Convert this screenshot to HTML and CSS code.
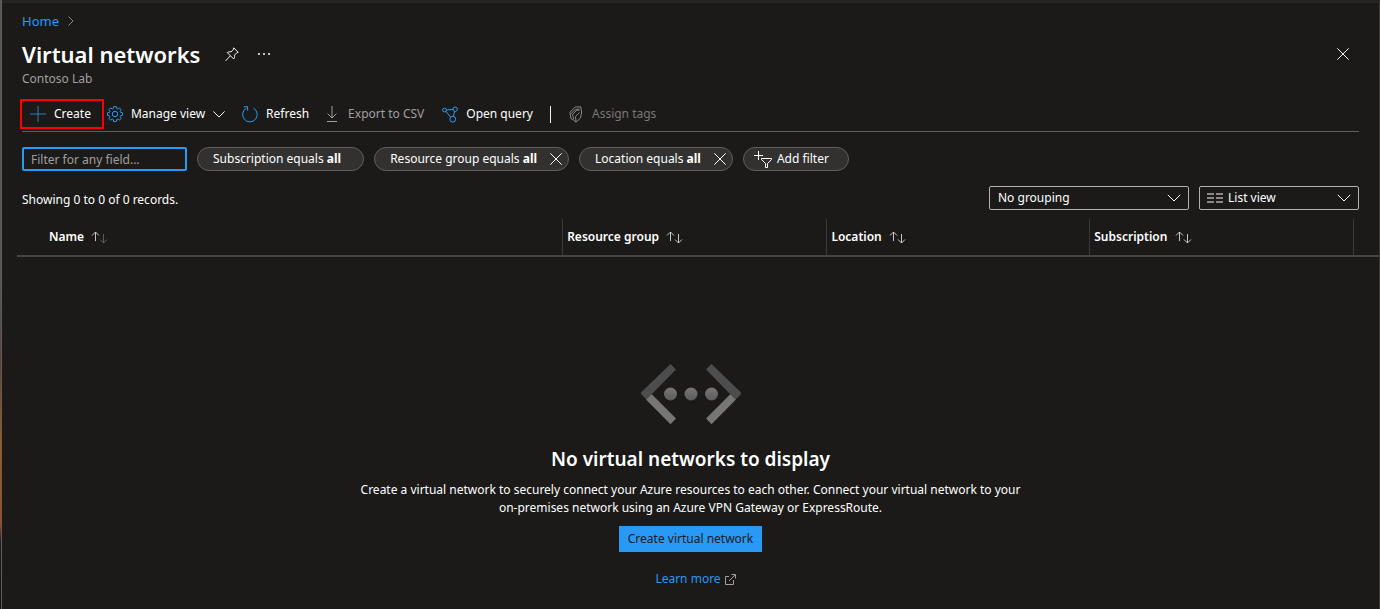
FILE: index.html
```html
<!DOCTYPE html>
<html lang="en">
<head>
<meta charset="utf-8">
<meta name="viewport" content="width=device-width, initial-scale=1">
<title>Virtual networks</title>
<link rel="stylesheet" href="styles.css">
</head>
<body>
<div class="shell">
  <div class="edge"></div>
  <main class="blade">
    <nav class="breadcrumb" aria-label="Breadcrumb">
      <a class="link" href="#">Home</a>
      <svg class="crumb-arrow" width="6" height="10" viewBox="0 0 6 10"><path d="M.5.5 5 5 .5 9.500"/></svg>
    </nav>

    <header class="header">
      <div class="title-row">
        <h1 class="title">Virtual networks</h1>
        <button class="icon-button pin" type="button" aria-label="Pin">
          <svg width="14" height="15" viewBox="0 0 14 15"><path d="M8.700.8 13.200 5.300 11.700 5.800 9.500 8.200C9.800 9.900 9.500 10.900 8.700 12L2.300 5.600C3.500 4.800 4.500 4.600 6.100 4.900L8.300 2.500ZM5.300 8.900.5 13.900"/></svg>
        </button>
        <button class="icon-button more" type="button" aria-label="More">
          <svg width="12" height="2" viewBox="0 0 12 2"><path class="dots" d="M0 0h2v2H0zM5 0h2v2H5zM10 0h2v2h-2z"/></svg>
        </button>
        <button class="icon-button close" type="button" aria-label="Close">
          <svg width="12" height="12" viewBox="0 0 12 12"><path d="M.3.3 11.700 11.700M11.700.3.3 11.700"/></svg>
        </button>
      </div>
      <p class="subtitle">Contoso Lab</p>
    </header>

    <div class="toolbar" role="toolbar" aria-label="Commands">
      <button class="command create" type="button">
        <svg width="16" height="16" viewBox="0 0 16 16"><path class="plus" d="M8 0v16M0 8h16"/></svg>
        Create
      </button>
      <button class="command manage" type="button">
        <svg width="16" height="16" viewBox="0 0 16 16"><path class="blue" d="M6.700.6h2.600l.4 2 1 .4 1.700-1.100 1.800 1.800-1.100 1.700.4 1 2 .4v2.500l-2 .4-.4 1 1.100 1.700-1.800 1.800-1.700-1.100-1 .4-.4 2H6.700l-.4-2-1-.4-1.700 1.100-1.800-1.800 1.100-1.700-.4-1-2-.4V6.800l2-.4.4-1-1.100-1.700 1.800-1.800L5.300 3l1-.4Z"/><circle class="blue" cx="8" cy="8" r="2.700"/></svg>
        Manage view
        <svg class="caret" width="12" height="7" viewBox="0 0 12 7"><path d="M.4.5 6 6 11.600.5"/></svg>
      </button>
      <button class="command refresh" type="button">
        <svg width="16" height="17" viewBox="0 0 16 17"><path class="blue" d="M11.500 2.200A7.300 7.300 0 1 1 4.500 2.100M1.800.7h3.800v3.900"/></svg>
        Refresh
      </button>
      <button class="command muted export" type="button" disabled>
        <svg width="12" height="16" viewBox="0 0 12 16"><path d="M6 0v12M1.500 7.500 6 12l4.500-4.500M1 15.500h10"/></svg>
        Export to CSV
      </button>
      <button class="command query" type="button">
        <svg width="16" height="17" viewBox="0 0 16 17"><g class="blue"><circle cx="2.500" cy="4" r="1.900"/><circle cx="13.200" cy="3.200" r="2.200"/><circle cx="10.800" cy="13.200" r="2.900"/><path d="M4.400 3.900 11 3.400M3.900 5.400l4.700 5.700M12.600 5.300l-1.200 5"/></g></svg>
        Open query
      </button>
      <span class="separator"></span>
      <button class="command disabled tags" type="button" disabled>
        <svg width="14" height="17" viewBox="0 0 14 17"><path class="tag" d="M6.200 1 11.700.8 12.600 6 11.600 11.900 7 16.200 4.200 13.800M6.200 1 1 6.200l.8 6.300 2.400 1.300M1.200 8.500l4.600-4.600 4.700-1M4.500 13l-.9-4.700 4-3.900 3-.4M7 16l-.5-5.500 4-4"/></svg>
        Assign tags
      </button>
    </div>

    <div class="filters">
      <input class="search" type="text" placeholder="Filter for any field..." aria-label="Filter for any field">
      <button class="chip plain" type="button"><span>Subscription equals <b>all</b></span></button>
      <button class="chip removable" type="button"><span>Resource group equals <b>all</b></span><svg width="12" height="12" viewBox="0 0 12 12"><path d="M.3.3 11.700 11.700M11.700.3.3 11.700"/></svg></button>
      <button class="chip removable" type="button"><span>Location equals <b>all</b></span><svg width="12" height="12" viewBox="0 0 12 12"><path d="M.3.3 11.700 11.700M11.700.3.3 11.700"/></svg></button>
      <button class="chip add" type="button"><svg width="18" height="17" viewBox="0 0 18 17"><path d="M4.500 0v9M0 4.500h9M7.500 7.500h10v1l-4 4v4h-2v-4l-4-4Z"/></svg><span>Add filter</span></button>
    </div>

    <div class="summary">
      <p class="count">Showing 0 to 0 of 0 records.</p>
      <div class="picker grouping">
        <select class="select" aria-label="Grouping"><option>No grouping</option></select>
        <svg class="caret" width="14" height="8" viewBox="0 0 14 8"><path d="M.8.8 7 7 13.200.8"/></svg>
      </div>
      <div class="picker view">
        <select class="select" aria-label="View"><option>List view</option></select>
        <svg class="list-icon" width="16" height="11" viewBox="0 0 16 11"><path d="M0 1h7M9 1h7M0 5h7M9 5h7M0 9h7M9 9h7"/></svg>
        <svg class="caret" width="14" height="8" viewBox="0 0 14 8"><path d="M.8.8 7 7 13.200.8"/></svg>
      </div>
    </div>

    <table class="grid">
      <thead>
        <tr>
          <th class="col-name" scope="col">Name <svg class="sort" width="17" height="13" viewBox="0 0 17 13"><path d="M4.500 10V1M1 4.500 4.500 1 8 4.500"/><path class="faint" d="M12.500 3v9M9 8.500l3.500 3.500L16 8.500"/></svg></th>
          <th class="col-group" scope="col">Resource group <svg class="sort" width="17" height="13" viewBox="0 0 17 13"><path d="M4.500 10V1M1 4.500 4.500 1 8 4.500M12.500 3v9M9 8.500l3.500 3.500L16 8.500"/></svg></th>
          <th class="col-location" scope="col">Location <svg class="sort" width="17" height="13" viewBox="0 0 17 13"><path d="M4.500 10V1M1 4.500 4.500 1 8 4.500M12.500 3v9M9 8.500l3.500 3.500L16 8.500"/></svg></th>
          <th class="col-subscription" scope="col">Subscription <svg class="sort" width="17" height="13" viewBox="0 0 17 13"><path d="M4.500 10V1M1 4.500 4.500 1 8 4.500M12.500 3v9M9 8.500l3.500 3.500L16 8.500"/></svg></th>
          <td class="col-menu"></td>
        </tr>
      </thead>
    </table>

    <section class="empty">
      <svg class="network" width="102" height="62" viewBox="0 0 102 62">
        <defs><linearGradient id="dot" x1="0" y1="0" x2="0" y2="1"><stop offset="0" stop-color="#767676"/><stop offset="1" stop-color="#5c5c5c"/></linearGradient></defs>
        <path fill="#767674" d="M6 36.500 11.500 31 36 55.500 30.500 61.200ZM96 36.500 90.500 31 66 55.500 71.500 61.200Z"/>
        <path fill="#4d4d4d" d="M30.500 1 36 6.500 6.500 36.500 1 31V29.500ZM71.500 1 66 6.500 95.500 36.500 101 31V29.500Z"/>
        <g fill="url(#dot)"><circle cx="30.500" cy="31" r="6.500"/><circle cx="51" cy="31" r="6.500"/><circle cx="71.500" cy="31" r="6.500"/></g>
      </svg>
      <h2 class="empty-title">No virtual networks to display</h2>
      <p class="empty-text">Create a virtual network to securely connect your Azure resources to each other. Connect your virtual network to your on-premises network using an Azure VPN Gateway or ExpressRoute.</p>
      <button class="primary" type="button">Create virtual network</button>
      <a class="link learn" href="#">Learn more
        <svg width="11" height="11" viewBox="0 0 11 11"><path d="M4 2.500H.5v8h8V6M4 7l6-6M6.500.5h4v4"/></svg>
      </a>
    </section>
  </main>
</div>
</body>
</html>
```
FILE: styles.css
```css
* { box-sizing: border-box; }
body {
  margin: 0;
  background: #1b1a19;
  color: #fff;
  font: 12px/18px "Segoe UI", "Noto Sans", "Open Sans", sans-serif;
}
h1, h2, p { margin: 0; }
button, input, select { font: inherit; color: inherit; margin: 0; }
button { padding: 0; border: 0; background: none; white-space: nowrap; }
svg { display: block; flex: none; fill: none; stroke: currentColor; stroke-width: 1; }

.shell { display: flex; min-height: 100vh; }
.edge {
  width: 2px;
  border-right: 1px solid #605e5c;
  background: linear-gradient(#56545c 0, #56545c 45%, #5a4030 60%, #b8560f 73%, #b8440c 86%, #201a1c 89%, #111 100%);
}
.blade {
  flex: 1;
  min-width: 0;
  border-top: 3px solid #252423;
  border-right: 1px solid #3b3a39;
}

.link { color: #2899f5; text-decoration: none; }
.breadcrumb {
  display: flex;
  align-items: center;
  gap: 9px;
  padding: 9px 20px 0;
  font-size: 13px;
}
.crumb-arrow { color: #8a8886; }

.header { padding: 8px 20px 0; }
.title-row { display: flex; align-items: center; height: 32px; }
.title { font-size: 22px; line-height: 32px; font-weight: 600; }
.icon-button { display: block; padding: 4px; color: #f3f2f1; }
.pin { margin-left: 21px; }
.more { margin-left: 11px; }
.dots { fill: #c8c6c4; stroke: none; }
.close { margin-left: auto; padding: 4px 10px; }
.subtitle { color: #a19f9d; }

.toolbar {
  display: flex;
  align-items: center;
  margin: 11px 20px 0;
  height: 33px;
  padding-bottom: 2px;
  border-bottom: 1px solid #605e5c;
}
.command { display: flex; align-items: center; gap: 8px; }
.create {
  height: 30px;
  margin-left: -2px;
  padding: 0 11px 0 8px;
  border: 2px solid #f00;
}
.plus { stroke: #2b7cc0; }
.blue { stroke: #2899f5; }
.manage { padding: 0 17px 0 3px; }
.refresh { padding-right: 17px; }
.export { padding-right: 18px; gap: 10px; }
.query { padding-right: 17px; }
.muted { color: #a19f9d; }
.disabled { color: #797775; gap: 9px; }
.tag { stroke: #8a8886; }
.separator { width: 1px; height: 17px; margin-right: 18px; background: #f3f2f1; }

.filters { display: flex; gap: 10px; padding: 15px 20px 0; }
.search {
  width: 165px;
  height: 24px;
  padding: 0 7px;
  border: 2px solid #2899f5;
  border-radius: 2px;
  background: #1b1a19;
}
.search::placeholder { color: #a19f9d; opacity: 1; }
.chip {
  display: flex;
  align-items: center;
  gap: 13px;
  height: 24px;
  padding: 0 15px;
  border: 1px solid #605e5c;
  border-radius: 12px;
  background: #323130;
}
.plain { padding-right: 22px; }
.removable { padding-right: 6px; }
.add { gap: 5px; padding: 0 19px 0 10px; }

.summary { display: flex; align-items: center; gap: 10px; padding: 15px 20px 0; }
.count { flex: 1; padding-top: 3px; }
.picker { display: grid; align-items: center; }
.picker > * { grid-area: 1 / 1; }
.grouping { width: 200px; }
.view { width: 160px; }
.select {
  appearance: none;
  width: 100%;
  height: 24px;
  padding: 0 8px;
  border: 1px solid #b3b0ad;
  border-radius: 2px;
  background: #1b1a19;
}
.view .select { padding-left: 28px; }
.picker svg { pointer-events: none; }
.picker .caret { justify-self: end; margin-right: 8px; }
.list-icon { margin-left: 8px; color: #8a8886; stroke-width: 2; }

.grid {
  width: calc(100% - 15px);
  margin: 9px 0 0 15px;
  border-collapse: separate;
  border-spacing: 0;
  table-layout: fixed;
  border-bottom: 2px solid #484644;
}
.grid th, .grid td { height: 36px; padding: 0 4px; border-right: 1px solid #3b3a39; text-align: left; font-weight: 600; white-space: nowrap; }
.grid .col-name { width: 40.1%; padding-left: 32px; }
.col-group { width: 19.4%; }
.col-location { width: 19.3%; }
.col-subscription { width: 19.4%; }
.grid .col-menu { border-right: 0; }
.sort { display: inline-block; margin-left: 4px; vertical-align: -3px; color: #c8c6c4; }
.faint { stroke: #605e5c; }

.empty {
  display: flex;
  flex-direction: column;
  align-items: center;
  padding: 106px 20px 20px;
  text-align: center;
}
.network { stroke: none; }
.empty-title { margin-top: 20px; font-size: 19px; line-height: 28px; font-weight: 600; }
.empty-text { max-width: 675px; margin-top: 8px; }
.empty-text, .primary { word-break: keep-all; }
.primary {
  height: 26px;
  margin-top: 9px;
  padding: 0 9px;
  background: #2899f5;
  color: #1b1a19;
}
.learn { display: flex; align-items: center; gap: 4px; margin-top: 18px; padding-left: 10px; }
.learn svg { color: #a19f9d; }
```
